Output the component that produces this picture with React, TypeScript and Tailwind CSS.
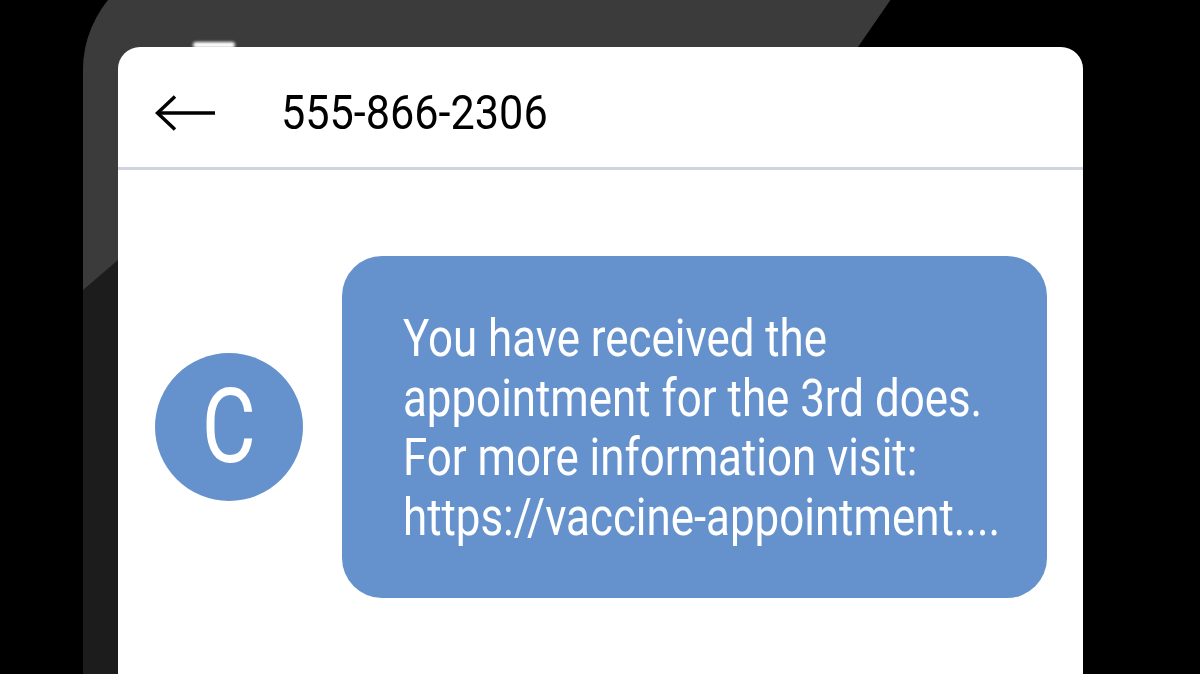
export default function App() {
    const lines = [
        'You have received the',
        'appointment for the 3rd does.',
        'For more information visit:',
        'https://vaccine-appointment....',
    ];

    return (
        <div className="h-[674px] w-[1200px] overflow-hidden bg-black font-['Roboto',sans-serif]">
            {/* Phone body */}
            <div className="relative ml-[83px] mt-[-40px] h-[780px] w-[1050px] overflow-hidden rounded-t-[110px] bg-black pl-[35px] pr-[50px] pt-[87px]">
                {/* Glossy shading on the frame */}
                <svg className="absolute inset-0 h-full w-full" viewBox="0 0 1050 780" preserveAspectRatio="none">
                    <polygon points="0,0 640,0 0,780" fill="#1c1c1c" />
                    <polygon points="0,0 835,0 775,87 720,170 35,300 0,330" fill="#3b3b3b" />
                </svg>
                <span className="absolute left-[110px] top-[82px] h-[6px] w-[42px] rounded-full bg-white blur-[1.5px]" />

                {/* Screen */}
                <div className="relative h-full rounded-t-[22px] bg-white">
                    {/* Header */}
                    <header className="flex h-[123px] items-center border-b-[3px] border-[#d0d4df] pl-[37px] pt-[12px]">
                        <svg width="62" height="36" viewBox="0 0 62 36" fill="none" stroke="#000" strokeWidth="3.5" strokeLinecap="butt">
                            <path d="M2 18 H60" />
                            <path d="M20 1.5 L2.5 18 L20 34.5" />
                        </svg>
                        <h1 className="ml-[64px] origin-left scale-x-[0.9] text-[48px] leading-none text-black">
                            555-866-2306
                        </h1>
                    </header>

                    {/* Conversation */}
                    <main className="flex items-center gap-[39px] pl-[37px] pt-[86px]">
                        <div className="flex h-[148px] w-[148px] shrink-0 items-center justify-center rounded-full bg-[#6592cc]">
                            <span className="scale-x-[0.8] text-[104px] leading-none text-white">C</span>
                        </div>
                        <div className="h-[342px] w-[705px] rounded-[40px] bg-[#6592cc] pl-[61px] pt-[53px]">
                            <p className="origin-left scale-x-[0.86] whitespace-nowrap text-[51px] leading-[59.5px] text-white">
                                {lines.map((l) => (
                                    <span key={l} className="block">
                                        {l}
                                    </span>
                                ))}
                            </p>
                        </div>
                    </main>
                </div>
            </div>
        </div>
    );
}
